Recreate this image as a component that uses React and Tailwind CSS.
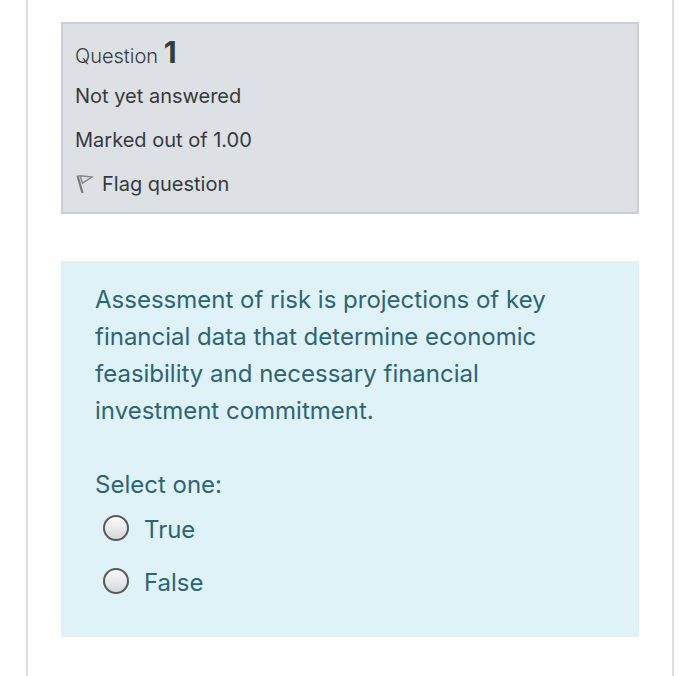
import React, { useState } from "react";

const options = ["True", "False"];

function FlagIcon() {
  return (
    <svg width="19" height="20" viewBox="0 0 19 20" fill="none" aria-hidden="true">
      <path d="M2.5 1.5L7.5 19" stroke="#77797d" strokeWidth="2.2" />
      <path d="M5 1.8L17 3L7.5 9.2Z" stroke="#85878b" strokeWidth="1.4" />
    </svg>
  );
}

function QuestionInfo() {
  const [flagged, setFlagged] = useState(false);

  return (
    <section className="border-2 border-[#cacdd5] bg-[#dde0e5] px-3 pt-3 pb-3 text-xl text-[#373a3c]">
      <h3 className="mb-2 leading-8 font-light">
        Question <span className="text-3xl leading-8 font-bold">1</span>
      </h3>
      <div className="mb-3 leading-8">Not yet answered</div>
      <div className="mb-3 leading-8">Marked out of 1.00</div>
      <button
        type="button"
        aria-pressed={flagged}
        onClick={() => setFlagged(!flagged)}
        className="flex items-center gap-2 leading-8"
      >
        <FlagIcon />
        Flag question
      </button>
    </section>
  );
}

export default function App() {
  const [answer, setAnswer] = useState("");

  return (
    <main className="min-h-screen bg-white px-[26px] font-['Inter',sans-serif]">
      <div className="min-h-screen border-x-2 border-[#dfdfdf] px-[33px] pt-[22px] pb-10">
        <QuestionInfo />

        <section className="mt-[47px] bg-[#def2f8] px-[34px] pt-5 pb-9 text-2xl leading-[37px] text-[#2f6473]">
          <p className="max-w-[480px]">
            Assessment of risk is projections of key financial data that
            determine economic feasibility and necessary financial investment
            commitment.
          </p>

          <fieldset className="mt-[37px]">
            <legend>Select one:</legend>
            <div className="mt-2 flex flex-col gap-4">
              {options.map((option) => (
                <label key={option} className="flex items-center gap-[15px] pl-2">
                  <input
                    type="radio"
                    name="answer"
                    value={option}
                    checked={answer === option}
                    onChange={() => setAnswer(option)}
                    className="mb-1 size-[26px] appearance-none rounded-full border-2 border-[#58595b] bg-linear-to-b from-[#fbfbfb] to-[#d6d8da] checked:border-8"
                  />
                  {option}
                </label>
              ))}
            </div>
          </fieldset>
        </section>
      </div>
    </main>
  );
}
